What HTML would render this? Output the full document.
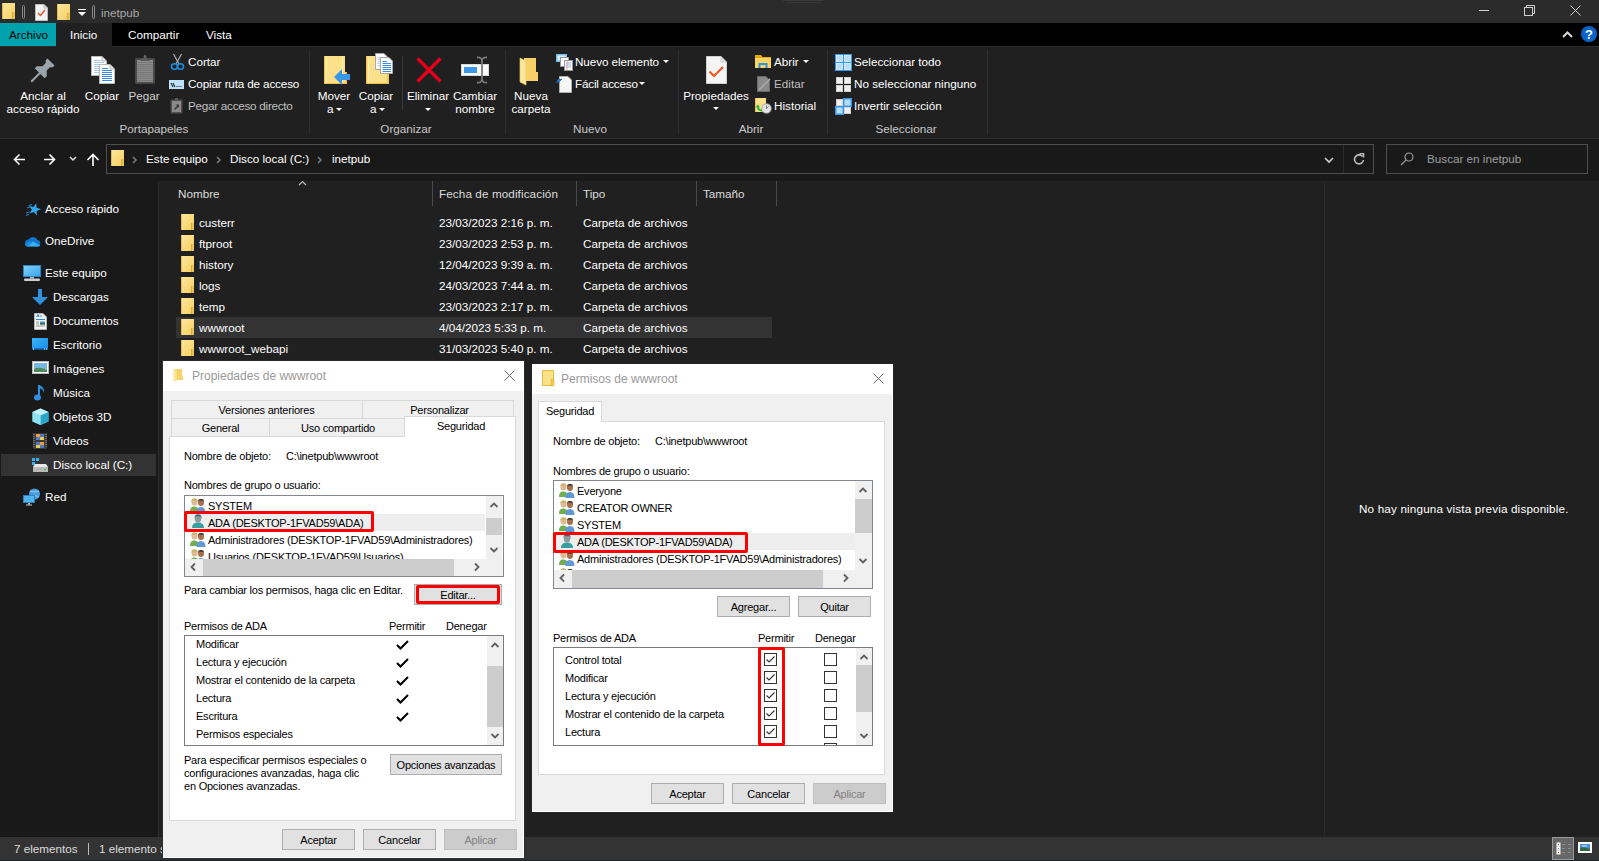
<!DOCTYPE html>
<html><head><meta charset="utf-8"><style>
html,body{margin:0;padding:0;}
body{-webkit-font-smoothing:antialiased;width:1599px;height:861px;position:relative;overflow:hidden;background:#202020;font-family:"Liberation Sans", sans-serif;}
.a{position:absolute;}
.t{position:absolute;white-space:nowrap;}
svg{shape-rendering:auto;}
</style></head><body>
<div class="a" style="left:0px;top:0px;width:1599px;height:23px;background:#2b2b2b;"></div>
<div class="a" style="left:783px;top:0px;width:40px;height:1px;background:#3a3a3a;"></div>
<div class="a" style="left:786px;top:2px;width:34px;height:1px;background:#383838;"></div>
<svg class="a" style="left:2px;top:3px" width="14" height="17" viewBox="0 0 14 17"><defs><linearGradient id="fg" x1="0" y1="0" x2="1" y2="1"><stop offset="0" stop-color="#fde69c"/><stop offset="1" stop-color="#f5cf63"/></linearGradient></defs><rect x="0" y="0" width="13" height="16" fill="url(#fg)"/><rect x="0" y="0" width="1" height="16" fill="#e9bd45"/><rect x="10" y="9" width="3" height="7" fill="#eac452"/><rect x="10" y="9" width="1" height="7" fill="#d9ad3a"/></svg>
<svg class="a" style="left:21px;top:5px" width="5" height="14" viewBox="0 0 5 14"><rect x="1.5" y="0.5" width="2" height="13" rx="1" fill="none" stroke="#8a8a8a"/></svg>
<svg class="a" style="left:35px;top:4px" width="13" height="17" viewBox="0 0 13 17"><path d="M0.5 0.5H9L12.5 4V16.5H0.5Z" fill="#f4f4f4" stroke="#bdbdbd"/><path d="M9 0.5V4H12.5" fill="#dcdcdc" stroke="#bdbdbd"/><path d="M3 9L5.5 11.5L10 6" fill="none" stroke="#e8572a" stroke-width="1.5"/></svg>
<svg class="a" style="left:57px;top:4px" width="14" height="17" viewBox="0 0 14 17"><defs><linearGradient id="fg" x1="0" y1="0" x2="1" y2="1"><stop offset="0" stop-color="#fde69c"/><stop offset="1" stop-color="#f5cf63"/></linearGradient></defs><rect x="0" y="0" width="13" height="16" fill="url(#fg)"/><rect x="0" y="0" width="1" height="16" fill="#e9bd45"/><rect x="10" y="9" width="3" height="7" fill="#eac452"/><rect x="10" y="9" width="1" height="7" fill="#d9ad3a"/></svg>
<svg class="a" style="left:78px;top:9px" width="8" height="8" viewBox="0 0 8 8"><rect x="0" y="0" width="8" height="1" fill="#fff"/><path d="M0 3H8L4 7Z" fill="#fff"/></svg>
<svg class="a" style="left:91px;top:5px" width="5" height="14" viewBox="0 0 5 14"><rect x="1.5" y="0.5" width="2" height="13" rx="1" fill="none" stroke="#8a8a8a"/></svg>
<div class="t" style="left:101px;top:7.10px;font-size:11.7px;line-height:11.7px;color:#a8a8a8;">inetpub</div>
<div class="a" style="left:1479px;top:10px;width:10px;height:1px;background:#cfcfcf;"></div>
<svg class="a" style="left:1524px;top:5px" width="11" height="11" viewBox="0 0 11 11"><rect x="0.5" y="2.5" width="8" height="8" fill="none" stroke="#cfcfcf"/><path d="M2.5 2.5V0.5H10.5V8.5H8.5" fill="none" stroke="#cfcfcf"/></svg>
<svg class="a" style="left:1570px;top:5px" width="11" height="11" viewBox="0 0 11 11"><path d="M0.5 0.5L10.5 10.5M10.5 0.5L0.5 10.5" stroke="#cfcfcf" stroke-width="1"/></svg>
<div class="a" style="left:0px;top:23px;width:1599px;height:23px;background:#000;"></div>
<div class="a" style="left:0px;top:23px;width:56px;height:23px;background:#00a3ad;"></div>
<div class="a" style="left:56px;top:23px;width:56px;height:23px;background:#202020;"></div>
<div class="t" style="left:9px;top:29.10px;font-size:11.7px;line-height:11.7px;color:#000;">Archivo</div>
<div class="t" style="left:70px;top:29.10px;font-size:11.7px;line-height:11.7px;color:#fff;">Inicio</div>
<div class="t" style="left:128px;top:29.10px;font-size:11.7px;line-height:11.7px;color:#fff;">Compartir</div>
<div class="t" style="left:206px;top:29.10px;font-size:11.7px;line-height:11.7px;color:#fff;">Vista</div>
<svg class="a" style="left:1562px;top:31px" width="11" height="7" viewBox="0 0 11 7"><path d="M1 6L5.5 1.5L10 6" fill="none" stroke="#d8d8d8" stroke-width="2"/></svg>
<svg class="a" style="left:1581px;top:26px" width="17" height="17" viewBox="0 0 17 17"><circle cx="8" cy="8" r="8" fill="#0a64c8"/><text x="8" y="13" font-family="Liberation Sans" font-weight="bold" font-size="13" fill="#fff" text-anchor="middle">?</text></svg>
<div class="a" style="left:0px;top:46px;width:1599px;height:92px;background:#202020;"></div>
<div class="a" style="left:0px;top:138px;width:1599px;height:1px;background:#2d2d2d;"></div>
<div class="a" style="left:0px;top:46px;width:56px;height:1px;background:#2b2b2b;"></div>
<div class="a" style="left:112px;top:46px;width:1487px;height:1px;background:#2b2b2b;"></div>
<div class="a" style="left:309px;top:50px;width:1px;height:84px;background:#2e2e2e;"></div>
<div class="a" style="left:505px;top:50px;width:1px;height:84px;background:#2e2e2e;"></div>
<div class="a" style="left:678px;top:50px;width:1px;height:84px;background:#2e2e2e;"></div>
<div class="a" style="left:827px;top:50px;width:1px;height:84px;background:#2e2e2e;"></div>
<div class="a" style="left:987px;top:50px;width:1px;height:84px;background:#2e2e2e;"></div>
<div class="a" style="left:402px;top:56px;width:1px;height:54px;background:#3a3a3a;"></div>
<div class="t" style="left:-46px;width:400px;text-align:center;top:123.10px;font-size:11.7px;line-height:11.7px;color:#c8c8c8;">Portapapeles</div>
<div class="t" style="left:206px;width:400px;text-align:center;top:123.10px;font-size:11.7px;line-height:11.7px;color:#c8c8c8;">Organizar</div>
<div class="t" style="left:390px;width:400px;text-align:center;top:123.10px;font-size:11.7px;line-height:11.7px;color:#c8c8c8;">Nuevo</div>
<div class="t" style="left:551px;width:400px;text-align:center;top:123.10px;font-size:11.7px;line-height:11.7px;color:#c8c8c8;">Abrir</div>
<div class="t" style="left:706px;width:400px;text-align:center;top:123.10px;font-size:11.7px;line-height:11.7px;color:#c8c8c8;">Seleccionar</div>
<svg class="a" style="left:30px;top:56px" width="28" height="28" viewBox="0 0 28 28"><g transform="translate(21,6) rotate(45)"><path d="M-5,0H5V2.5L3,4.5V9L7,13V16H1V28H-1V16H-7V13L-3,9V4.5L-5,2.5Z" fill="#9aa4ab"/></g></svg>
<div class="t" style="left:-157px;width:400px;text-align:center;top:90.10px;font-size:11.7px;line-height:11.7px;color:#fff;">Anclar al</div>
<div class="t" style="left:-157px;width:400px;text-align:center;top:103.10px;font-size:11.7px;line-height:11.7px;color:#fff;">acceso rápido</div>
<svg class="a" style="left:90px;top:55px" width="27" height="30" viewBox="0 0 27 30"><path d="M1.5 1.5H12L16.5 6V20.5H1.5Z" fill="#fff" stroke="#b8b8b8"/><path d="M12 1.5V6H16.5" fill="#e6e6e6" stroke="#b8b8b8"/><path d="M4 5.5H11M4 7.5H14M4 9.5H14M4 11.5H14M4 13.5H14M4 15.5H14M4 17.5H14" stroke="#a9c8f0"/><path d="M9.5 9.5H20L24.5 14V28.5H9.5Z" fill="#fff" stroke="#b8b8b8"/><path d="M20 9.5V14H24.5" fill="#e6e6e6" stroke="#b8b8b8"/><path d="M12 13.5H18M12 15.5H22M12 17.5H22M12 19.5H22M12 21.5H22M12 23.5H22M12 25.5H22" stroke="#3a8ae6"/></svg>
<div class="t" style="left:-98px;width:400px;text-align:center;top:90.10px;font-size:11.7px;line-height:11.7px;color:#fff;">Copiar</div>
<svg class="a" style="left:134px;top:54px" width="22" height="31" viewBox="0 0 22 31"><rect x="1" y="4" width="20" height="26" rx="1.5" fill="#4a4a4a"/><rect x="3" y="6" width="16" height="22" fill="#8c8c8c"/><path d="M3 8.5H19M3 10.5H19M3 12.5H19M3 14.5H19M3 16.5H19M3 18.5H19M3 20.5H19M3 22.5H19M3 24.5H19M3 26.5H19" stroke="#767676"/><path d="M6 7L8 4H14L16 7Z" fill="#5a5a5a"/><circle cx="11" cy="2.5" r="1.5" fill="#6a6a6a"/></svg>
<div class="t" style="left:-56px;width:400px;text-align:center;top:90.10px;font-size:11.7px;line-height:11.7px;color:#cfcfcf;">Pegar</div>
<svg class="a" style="left:170px;top:53px" width="15" height="18" viewBox="0 0 15 18"><path d="M3.5 1L9 11M11.5 1L6 11" stroke="#b0b0b0" stroke-width="1.2"/><ellipse cx="4.5" cy="13.5" rx="3" ry="2.8" fill="none" stroke="#1e8fe0" stroke-width="1.6"/><ellipse cx="10.5" cy="13.5" rx="3" ry="2.8" fill="none" stroke="#1e8fe0" stroke-width="1.6"/></svg>
<div class="t" style="left:188px;top:56.10px;font-size:11.7px;line-height:11.7px;color:#fff;">Cortar</div>
<svg class="a" style="left:169px;top:80px" width="16" height="9" viewBox="0 0 16 9"><rect x="0" y="0" width="15" height="9" fill="#bfe1fb" stroke="#8ec3ee" stroke-width="0"/><path d="M2 3L4 7M4 3L6 7" stroke="#222" stroke-width="1.1"/><path d="M7.5 6.5H8.5M9.5 6.5H10.5M11.5 6.5H12.5" stroke="#222" stroke-width="1"/></svg>
<div class="t" style="left:188px;top:78.10px;font-size:11.7px;line-height:11.7px;color:#fff;letter-spacing:-0.15px;">Copiar ruta de acceso</div>
<svg class="a" style="left:170px;top:98px" width="13" height="16" viewBox="0 0 13 16"><rect x="0.5" y="1.5" width="12" height="14" rx="1" fill="#505050"/><rect x="2" y="3" width="9" height="11" fill="#8a8a8a"/><path d="M4.5 11.5L8 8" stroke="#3c3c3c" stroke-width="1.6"/><path d="M5.5 6.5H9V10Z" fill="#3c3c3c"/><rect x="5" y="0" width="3" height="2" fill="#5a5a5a"/></svg>
<div class="t" style="left:188px;top:100.10px;font-size:11.7px;line-height:11.7px;color:#c0c0c0;letter-spacing:-0.26px;">Pegar acceso directo</div>
<svg class="a" style="left:323px;top:55px" width="28" height="31" viewBox="0 0 28 31"><rect x="1" y="1" width="21" height="28" fill="#fde08a"/><rect x="1" y="1" width="1" height="28" fill="#f5c84a"/><rect x="3" y="2" width="1" height="26" fill="#fff0b8"/><rect x="19" y="2" width="1" height="26" fill="#fff0b8"/><rect x="1" y="28" width="21" height="1" fill="#f0c040"/><path d="M22 17H24V29H22Z" fill="#f2c64e"/><path d="M11 22L19 14V19H27V25H19V30Z" fill="#3a98e6"/></svg>
<div class="t" style="left:134px;width:400px;text-align:center;top:90.10px;font-size:11.7px;line-height:11.7px;color:#fff;">Mover</div>
<div class="t" style="left:327px;top:103.10px;font-size:11.7px;line-height:11.7px;color:#fff;">a</div>
<svg class="a" style="left:336px;top:108px" width="6" height="4" viewBox="0 0 6 4"><path d="M0 0H6L3 3Z" fill="#fff"/></svg>
<svg class="a" style="left:365px;top:53px" width="29" height="32" viewBox="0 0 29 32"><rect x="1" y="3" width="21" height="28" fill="#fde08a"/><rect x="1" y="3" width="1" height="28" fill="#f5c84a"/><rect x="3" y="4" width="1" height="26" fill="#fff0b8"/><rect x="1" y="30" width="21" height="1" fill="#f0c040"/><path d="M22 20H24V31H22Z" fill="#f2c64e"/><path d="M10.5 0.5H19L22.5 4V16.5H10.5Z" fill="#fff" stroke="#a8a8a8"/><path d="M12.5 4.5H18M12.5 6.5H18M12.5 8.5H18M12.5 10.5H18M12.5 12.5H18" stroke="#a9c8f0"/><path d="M15.5 4.5H24L27.5 8V20.5H15.5Z" fill="#fff" stroke="#a8a8a8"/><path d="M17.5 8.5H22M17.5 10.5H26M17.5 12.5H26M17.5 14.5H26M17.5 16.5H26M17.5 18.5H26" stroke="#3a8ae6"/></svg>
<div class="t" style="left:176px;width:400px;text-align:center;top:90.10px;font-size:11.7px;line-height:11.7px;color:#fff;">Copiar</div>
<div class="t" style="left:370px;top:103.10px;font-size:11.7px;line-height:11.7px;color:#fff;">a</div>
<svg class="a" style="left:379px;top:108px" width="6" height="4" viewBox="0 0 6 4"><path d="M0 0H6L3 3Z" fill="#fff"/></svg>
<svg class="a" style="left:416px;top:57px" width="26" height="26" viewBox="0 0 26 26"><path d="M1.5 1.5L24.5 24.5M24.5 1.5L1.5 24.5" stroke="#e4001b" stroke-width="3.4"/></svg>
<div class="t" style="left:228px;width:400px;text-align:center;top:90.10px;font-size:11.7px;line-height:11.7px;color:#fff;">Eliminar</div>
<svg class="a" style="left:425px;top:108px" width="6" height="4" viewBox="0 0 6 4"><path d="M0 0H6L3 3Z" fill="#fff"/></svg>
<svg class="a" style="left:460px;top:56px" width="30" height="28" viewBox="0 0 30 28"><rect x="1.5" y="8.5" width="27" height="11" fill="#fafafa" stroke="#dadada"/><rect x="4" y="11" width="13" height="6" fill="#3a98e6"/><path d="M17 1.5Q22 1 22 5V23Q22 27 17 26.5M27 1.5Q22 1 22 5V23Q22 27 27 26.5" fill="none" stroke="#7a7a7a" stroke-width="1.8"/></svg>
<div class="t" style="left:275px;width:400px;text-align:center;top:90.10px;font-size:11.7px;line-height:11.7px;color:#fff;">Cambiar</div>
<div class="t" style="left:275px;width:400px;text-align:center;top:103.10px;font-size:11.7px;line-height:11.7px;color:#fff;">nombre</div>
<svg class="a" style="left:519px;top:57px" width="20" height="29" viewBox="0 0 20 29"><path d="M5 1H17V15H19V24H5Z" fill="#f7d168"/><path d="M1 1L7 4V28L1 25Z" fill="#fde7a0"/><path d="M1 1L7 4V28L1 25Z" fill="none" stroke="#f0c850" stroke-width="0.7"/></svg>
<div class="t" style="left:331px;width:400px;text-align:center;top:90.10px;font-size:11.7px;line-height:11.7px;color:#fff;">Nueva</div>
<div class="t" style="left:331px;width:400px;text-align:center;top:103.10px;font-size:11.7px;line-height:11.7px;color:#fff;">carpeta</div>
<svg class="a" style="left:556px;top:54px" width="17" height="17" viewBox="0 0 17 17"><rect x="0" y="0" width="11" height="8" fill="#7cc0f0"/><rect x="1.5" y="1.5" width="8" height="5" fill="#d8eefc"/><rect x="4.5" y="3.5" width="8" height="9" fill="#fff" stroke="#999"/><rect x="8.5" y="6.5" width="8" height="10" fill="#fff" stroke="#999"/><path d="M10 9H15M10 11H15M10 13H15" stroke="#8bb8e8"/><path d="M11 7V16" stroke="#f0a0a0"/></svg>
<div class="t" style="left:575px;top:56.10px;font-size:11.7px;line-height:11.7px;color:#fff;letter-spacing:-0.08px;">Nuevo elemento</div>
<svg class="a" style="left:663px;top:60px" width="6" height="4" viewBox="0 0 6 4"><path d="M0 0H6L3 3Z" fill="#fff"/></svg>
<svg class="a" style="left:556px;top:75px" width="16" height="18" viewBox="0 0 16 18"><path d="M3.5 1.5H12L15.5 5V17.5H3.5Z" fill="#f6f6f6" stroke="#b0b0b0"/><path d="M2 4.5H6M1 5.5H5M0 7H4" stroke="#1a78d0" stroke-width="1"/></svg>
<div class="t" style="left:575px;top:78.10px;font-size:11.7px;line-height:11.7px;color:#fff;letter-spacing:-0.18px;">Fácil acceso</div>
<svg class="a" style="left:639px;top:82px" width="6" height="4" viewBox="0 0 6 4"><path d="M0 0H6L3 3Z" fill="#fff"/></svg>
<svg class="a" style="left:705px;top:55px" width="23" height="30" viewBox="0 0 23 30"><path d="M1.5 1.5H16L21.5 7V28.5H1.5Z" fill="#f5f5f5" stroke="#d0d0d0"/><path d="M16 1.5V7H21.5" fill="#dedede" stroke="#d0d0d0"/><path d="M4.5 16.5L9 21L18 12" fill="none" stroke="#f25a1e" stroke-width="2.2"/></svg>
<div class="t" style="left:516px;width:400px;text-align:center;top:90.10px;font-size:11.7px;line-height:11.7px;color:#fff;">Propiedades</div>
<svg class="a" style="left:713px;top:107px" width="6" height="4" viewBox="0 0 6 4"><path d="M0 0H6L3 3Z" fill="#fff"/></svg>
<svg class="a" style="left:755px;top:54px" width="17" height="16" viewBox="0 0 17 16"><path d="M0 1H6L7.5 3H16V14H0Z" fill="#e8a80c"/><rect x="0" y="4" width="16" height="10" fill="#fcd462"/><path d="M3.5 14V9H12.5V14H10.5V11H5.5V14Z" fill="#2b8fe8"/></svg>
<div class="t" style="left:774px;top:56.10px;font-size:11.7px;line-height:11.7px;color:#fff;">Abrir</div>
<svg class="a" style="left:803px;top:60px" width="6" height="4" viewBox="0 0 6 4"><path d="M0 0H6L3 3Z" fill="#fff"/></svg>
<svg class="a" style="left:756px;top:75px" width="16" height="17" viewBox="0 0 16 17"><path d="M1.5 1.5H10L13.5 5V16.5H1.5Z" fill="#8a8a8a" stroke="#6a6a6a"/><path d="M3 15L14 4" stroke="#a8a8a8" stroke-width="1.6"/></svg>
<div class="t" style="left:774px;top:78.10px;font-size:11.7px;line-height:11.7px;color:#bfbfbf;">Editar</div>
<svg class="a" style="left:755px;top:97px" width="17" height="17" viewBox="0 0 17 17"><rect x="0" y="1" width="11" height="14" fill="#fde08a"/><rect x="0" y="1" width="1" height="14" fill="#f0c040"/><circle cx="11.5" cy="11.5" r="4.8" fill="#e4e4e4" stroke="#9a9a9a" stroke-width="0.8"/><path d="M11.5 8.5V11.5L13.5 9.5" stroke="#666" fill="none" stroke-width="0.8"/><path d="M2.5 9.5Q3 13.5 7 13.5" fill="none" stroke="#27b33a" stroke-width="2"/><path d="M0.5 10L3 7.5L5 10.5Z" fill="#27b33a"/></svg>
<div class="t" style="left:774px;top:100.10px;font-size:11.7px;line-height:11.7px;color:#fff;">Historial</div>
<svg class="a" style="left:835px;top:54px" width="17" height="17" viewBox="0 0 17 17"><rect x="0" y="0" width="17" height="17" fill="#3399ee"/><rect x="1.5" y="1.5" width="6" height="6" fill="#b9ddf9" stroke="#e6f3fd" stroke-width="0.8"/><rect x="9.5" y="1.5" width="6" height="6" fill="#b9ddf9" stroke="#e6f3fd" stroke-width="0.8"/><rect x="1.5" y="9.5" width="6" height="6" fill="#b9ddf9" stroke="#e6f3fd" stroke-width="0.8"/><rect x="9.5" y="9.5" width="6" height="6" fill="#b9ddf9" stroke="#e6f3fd" stroke-width="0.8"/></svg>
<div class="t" style="left:854px;top:56.10px;font-size:11.7px;line-height:11.7px;color:#fff;">Seleccionar todo</div>
<svg class="a" style="left:835px;top:76px" width="17" height="17" viewBox="0 0 17 17"><rect x="1.5" y="1.5" width="6" height="6" fill="#f0f0f0" stroke="#d0d0d0"/><rect x="9.5" y="1.5" width="6" height="6" fill="#f0f0f0" stroke="#d0d0d0"/><rect x="1.5" y="9.5" width="6" height="6" fill="#f0f0f0" stroke="#d0d0d0"/><rect x="9.5" y="9.5" width="6" height="6" fill="#f0f0f0" stroke="#d0d0d0"/></svg>
<div class="t" style="left:854px;top:78.10px;font-size:11.7px;line-height:11.7px;color:#fff;">No seleccionar ninguno</div>
<svg class="a" style="left:835px;top:98px" width="17" height="17" viewBox="0 0 17 17"><rect x="8" y="0" width="9" height="9" fill="#3399ee"/><rect x="0" y="8" width="9" height="9" fill="#3399ee"/><rect x="9.5" y="1.5" width="6" height="6" fill="#b9ddf9"/><rect x="1.5" y="9.5" width="6" height="6" fill="#b9ddf9"/><rect x="1.5" y="1.5" width="6" height="6" fill="#f0f0f0" stroke="#d0d0d0"/><rect x="9.5" y="9.5" width="6" height="6" fill="#f0f0f0" stroke="#d0d0d0"/></svg>
<div class="t" style="left:854px;top:100.10px;font-size:11.7px;line-height:11.7px;color:#fff;">Invertir selección</div>
<div class="a" style="left:0px;top:139px;width:1599px;height:42px;background:#191919;"></div>
<svg class="a" style="left:13px;top:153px" width="13" height="13" viewBox="0 0 13 13"><path d="M12 6.5H1.5M6.5 1.5L1.5 6.5L6.5 11.5" fill="none" stroke="#fff" stroke-width="1.6"/></svg>
<svg class="a" style="left:43px;top:153px" width="13" height="13" viewBox="0 0 13 13"><path d="M1 6.5H11.5M6.5 1.5L11.5 6.5L6.5 11.5" fill="none" stroke="#fff" stroke-width="1.6"/></svg>
<svg class="a" style="left:69px;top:156px" width="8" height="6" viewBox="0 0 8 6"><path d="M1 1L4 4L7 1" fill="none" stroke="#e0e0e0" stroke-width="1.5"/></svg>
<svg class="a" style="left:86px;top:153px" width="14" height="14" viewBox="0 0 14 14"><path d="M7 13V1.5M1.5 7L7 1.5L12.5 7" fill="none" stroke="#fff" stroke-width="1.6"/></svg>
<div class="a" style="left:106px;top:144px;width:1268px;height:30px;background:transparent;border:1px solid #4f4f4f;box-sizing:border-box;"></div>
<div class="a" style="left:1343px;top:145px;width:1px;height:28px;background:#2a2a2a;"></div>
<svg class="a" style="left:111px;top:150px" width="14" height="17" viewBox="0 0 14 17"><defs><linearGradient id="fg" x1="0" y1="0" x2="1" y2="1"><stop offset="0" stop-color="#fde69c"/><stop offset="1" stop-color="#f5cf63"/></linearGradient></defs><rect x="0" y="0" width="13" height="16" fill="url(#fg)"/><rect x="0" y="0" width="1" height="16" fill="#e9bd45"/><rect x="10" y="9" width="3" height="7" fill="#eac452"/><rect x="10" y="9" width="1" height="7" fill="#d9ad3a"/></svg>
<svg class="a" style="left:132px;top:156px" width="6" height="8" viewBox="0 0 6 8"><path d="M1 1L4 4L1 7" fill="none" stroke="#7a7a7a" stroke-width="1.6"/></svg>
<div class="t" style="left:146px;top:153.10px;font-size:11.7px;line-height:11.7px;color:#fff;">Este equipo</div>
<svg class="a" style="left:317px;top:156px" width="6" height="8" viewBox="0 0 6 8"><path d="M1 1L4 4L1 7" fill="none" stroke="#7a7a7a" stroke-width="1.6"/></svg>
<div class="t" style="left:230px;top:153.10px;font-size:11.7px;line-height:11.7px;color:#fff;">Disco local (C:)</div>
<svg class="a" style="left:216px;top:156px" width="6" height="8" viewBox="0 0 6 8"><path d="M1 1L4 4L1 7" fill="none" stroke="#7a7a7a" stroke-width="1.6"/></svg>
<div class="t" style="left:332px;top:153.10px;font-size:11.7px;line-height:11.7px;color:#fff;">inetpub</div>
<svg class="a" style="left:1324px;top:157px" width="10" height="7" viewBox="0 0 10 7"><path d="M1 1L5 5L9 1" fill="none" stroke="#cfcfcf" stroke-width="1.6"/></svg>
<svg class="a" style="left:1353px;top:153px" width="12" height="12" viewBox="0 0 12 12"><path d="M9.5 3.5A4.5 4.5 0 1 0 10.5 7" fill="none" stroke="#bdbdbd" stroke-width="1.6"/><path d="M6.5 0.5H10.5V4.5" fill="none" stroke="#bdbdbd" stroke-width="1.6"/></svg>
<div class="a" style="left:1386px;top:144px;width:202px;height:30px;background:transparent;border:1px solid #4f4f4f;box-sizing:border-box;"></div>
<svg class="a" style="left:1400px;top:152px" width="14" height="14" viewBox="0 0 14 14"><circle cx="9" cy="5" r="4" fill="none" stroke="#9a9a9a" stroke-width="1.2"/><path d="M6 8L1 13" stroke="#9a9a9a" stroke-width="1.2"/></svg>
<div class="t" style="left:1427px;top:153.10px;font-size:11.7px;line-height:11.7px;color:#9e9e9e;">Buscar en inetpub</div>
<div class="a" style="left:0px;top:181px;width:158px;height:656px;background:#191919;"></div>
<div class="a" style="left:158px;top:181px;width:1px;height:656px;background:#2b2b2b;"></div>
<div class="a" style="left:1px;top:454px;width:155px;height:22px;background:#333333;"></div>
<div class="t" style="left:45px;top:203.10px;font-size:11.7px;line-height:11.7px;color:#fff;">Acceso rápido</div>
<div class="t" style="left:45px;top:235.10px;font-size:11.7px;line-height:11.7px;color:#fff;">OneDrive</div>
<div class="t" style="left:45px;top:267.10px;font-size:11.7px;line-height:11.7px;color:#fff;">Este equipo</div>
<div class="t" style="left:53px;top:291.10px;font-size:11.7px;line-height:11.7px;color:#fff;">Descargas</div>
<div class="t" style="left:53px;top:315.10px;font-size:11.7px;line-height:11.7px;color:#fff;">Documentos</div>
<div class="t" style="left:53px;top:339.10px;font-size:11.7px;line-height:11.7px;color:#fff;">Escritorio</div>
<div class="t" style="left:53px;top:363.10px;font-size:11.7px;line-height:11.7px;color:#fff;">Imágenes</div>
<div class="t" style="left:53px;top:387.10px;font-size:11.7px;line-height:11.7px;color:#fff;">Música</div>
<div class="t" style="left:53px;top:411.10px;font-size:11.7px;line-height:11.7px;color:#fff;">Objetos 3D</div>
<div class="t" style="left:53px;top:435.10px;font-size:11.7px;line-height:11.7px;color:#fff;">Videos</div>
<div class="t" style="left:53px;top:459.10px;font-size:11.7px;line-height:11.7px;color:#fff;">Disco local (C:)</div>
<div class="t" style="left:45px;top:491.10px;font-size:11.7px;line-height:11.7px;color:#fff;">Red</div>
<svg class="a" style="left:26px;top:203px" width="17" height="14" viewBox="0 0 17 14"><path d="M10.18,0.22 L10.60,4.80 L14.99,6.16 L10.76,7.97 L10.83,12.57 L7.80,9.11 L3.45,10.59 L5.80,6.64 L3.05,2.96 L7.53,3.98Z" fill="#2fa8f0"/><path d="M2.5 2.5L6 1.5M1 5L4.5 4M0 10L3.5 9M-0.5 12.5L3 11.5" stroke="#2a90d8" stroke-width="0.9"/></svg>
<svg class="a" style="left:24px;top:235px" width="17" height="12" viewBox="0 0 17 12"><path d="M1 8.5A3.5 3.5 0 0 1 4.5 4.5A5 5 0 0 1 13.5 5A3.2 3.2 0 0 1 16 9.5A2 2 0 0 1 14 11.5H3A2.5 2.5 0 0 1 1 8.5Z" fill="#0f74cc"/><path d="M3 11.5L9 6.5L16 10.5A2 2 0 0 1 14 11.5Z" fill="#38aef0"/><path d="M1.5 9.5L5 7L9 6.5L3 11.5A2.5 2.5 0 0 1 1.5 9.5Z" fill="#1e8ee0"/></svg>
<svg class="a" style="left:23px;top:265px" width="18" height="17" viewBox="0 0 18 17"><defs><linearGradient id="mg" x1="0" y1="0" x2="1" y2="1"><stop offset="0" stop-color="#7fd0fa"/><stop offset="1" stop-color="#3aa6ec"/></linearGradient></defs><rect x="1" y="1" width="16" height="10" fill="url(#mg)"/><rect x="0.5" y="0.5" width="17" height="11" fill="none" stroke="#2b86c8" stroke-width="1"/><rect x="7" y="12" width="4" height="1.5" fill="#bfbfbf"/><rect x="1" y="13.5" width="16" height="2.5" rx="1" fill="#c8ccd0"/></svg>
<svg class="a" style="left:32px;top:289px" width="16" height="17" viewBox="0 0 16 17"><rect x="6" y="0" width="4" height="9" fill="#2f8fe0"/><path d="M0 8H16L8 16Z" fill="#2f8fe0"/></svg>
<svg class="a" style="left:34px;top:313px" width="13" height="17" viewBox="0 0 13 17"><path d="M0.5 0.5H9L12.5 4V16.5H0.5Z" fill="#f4f4f4" stroke="#b8b8b8"/><path d="M2.5 4L4 1.5L5 4M3 3H4.5" stroke="#2a8ae0" fill="none"/><path d="M6 3H8" stroke="#2a8ae0"/><path d="M2 6.5H11" stroke="#2a8ae0"/><path d="M2 9H5M2 11H5M2 13H11" stroke="#9a9a9a"/><rect x="6" y="8.5" width="5" height="3" fill="#4a90d0"/><rect x="6" y="10" width="5" height="1.5" fill="#3a7040"/></svg>
<svg class="a" style="left:32px;top:338px" width="17" height="13" viewBox="0 0 17 13"><defs><linearGradient id="dg" x1="0" y1="0" x2="1" y2="1"><stop offset="0" stop-color="#3ab4fa"/><stop offset="1" stop-color="#1a8ae6"/></linearGradient></defs><rect x="0" y="0" width="16" height="12" fill="url(#dg)"/><rect x="0" y="10.5" width="16" height="1.5" fill="#0c4f8a"/><rect x="1" y="10.5" width="1" height="1" fill="#fff"/><rect x="12" y="10.5" width="1" height="1" fill="#fff"/><rect x="14" y="10.5" width="1" height="1" fill="#fff"/></svg>
<svg class="a" style="left:32px;top:361px" width="17" height="14" viewBox="0 0 17 14"><rect x="0.5" y="0.5" width="16" height="12" fill="#fff" stroke="#bbb"/><rect x="2" y="2" width="13" height="9" fill="#79b7e0"/><path d="M2 8Q8 5 15 9V11H2Z" fill="#4c8a5a"/></svg>
<svg class="a" style="left:34px;top:384px" width="12" height="17" viewBox="0 0 12 17"><path d="M5 1V13" stroke="#2f8fe0" stroke-width="2"/><ellipse cx="3.5" cy="13.5" rx="3.5" ry="3" fill="#2f8fe0"/><path d="M5 1Q11 3 10 9Q9 5 5 4Z" fill="#2f8fe0"/></svg>
<svg class="a" style="left:32px;top:408px" width="17" height="18" viewBox="0 0 17 18"><path d="M8.5 0.5L16.5 4V13.5L8.5 17L0.5 13.5V4Z" fill="#62d3ea"/><path d="M0.5 4L8.5 7.5L16.5 4L8.5 0.5Z" fill="#c4f3fb"/><path d="M8.5 7.5V17L16.5 13.5V4Z" fill="#2aa5c8"/><path d="M0.5 4L8.5 7.5V17L0.5 13.5Z" fill="#8fe2f2"/></svg>
<svg class="a" style="left:33px;top:433px" width="14" height="16" viewBox="0 0 14 16"><rect x="0" y="0" width="14" height="16" fill="#3a3a3a"/><path d="M1 1V15M13 1V15" stroke="#9a9a9a" stroke-dasharray="1 1"/><rect x="3" y="1" width="8" height="6" fill="#4a7ad8"/><rect x="3" y="1" width="4" height="3" fill="#f0a030"/><rect x="7" y="4" width="4" height="3" fill="#e8d040"/><rect x="3" y="9" width="8" height="6" fill="#4a7ad8"/><rect x="7" y="9" width="4" height="3" fill="#f0a030"/><rect x="3" y="12" width="4" height="3" fill="#e8d040"/></svg>
<svg class="a" style="left:32px;top:458px" width="16" height="15" viewBox="0 0 16 15"><rect x="0" y="0" width="3" height="3" fill="#3ab0f0"/><rect x="4" y="0" width="3" height="3" fill="#3ab0f0"/><rect x="0" y="4" width="3" height="3" fill="#3ab0f0"/><path d="M1 9L3 6H14L16 9Z" fill="#e8e8e8"/><rect x="1" y="9" width="15" height="5" fill="#b8b8b8"/><rect x="12" y="11" width="2" height="1" fill="#2bd12b"/></svg>
<svg class="a" style="left:23px;top:488px" width="18" height="18" viewBox="0 0 18 18"><circle cx="11.5" cy="6" r="5.5" fill="#4a9ee0"/><path d="M7 3Q11 5 16 3M7 8Q11 6 16 9" stroke="#a8d8f8" fill="none" stroke-width="0.8"/><rect x="0.5" y="7.5" width="11" height="7" fill="#4fb4f0" stroke="#2a80c0"/><rect x="5" y="15" width="2" height="1.5" fill="#bbb"/><rect x="3" y="16.5" width="6" height="1" fill="#ccc"/></svg>
<div class="a" style="left:159px;top:181px;width:1166px;height:656px;background:#202020;"></div>
<div class="a" style="left:1324px;top:181px;width:1px;height:656px;background:#2b2b2b;"></div>
<svg class="a" style="left:298px;top:180px" width="9" height="6" viewBox="0 0 9 6"><path d="M1 5L4.5 1.5L8 5" fill="none" stroke="#bdbdbd" stroke-width="1.2"/></svg>
<div class="t" style="left:178px;top:188.10px;font-size:11.7px;line-height:11.7px;color:#dcdcdc;">Nombre</div>
<div class="t" style="left:439px;top:188.10px;font-size:11.7px;line-height:11.7px;color:#dcdcdc;letter-spacing:0.1px;">Fecha de modificación</div>
<div class="t" style="left:583px;top:188.10px;font-size:11.7px;line-height:11.7px;color:#dcdcdc;">Tipo</div>
<div class="t" style="left:703px;top:188.10px;font-size:11.7px;line-height:11.7px;color:#dcdcdc;">Tamaño</div>
<div class="a" style="left:432px;top:181px;width:1px;height:25px;background:#4a4a4a;"></div>
<div class="a" style="left:576px;top:181px;width:1px;height:25px;background:#4a4a4a;"></div>
<div class="a" style="left:696px;top:181px;width:1px;height:25px;background:#4a4a4a;"></div>
<div class="a" style="left:776px;top:181px;width:1px;height:25px;background:#4a4a4a;"></div>
<div class="a" style="left:176px;top:317px;width:596px;height:21px;background:#333333;"></div>
<svg class="a" style="left:181px;top:214px" width="14" height="17" viewBox="0 0 14 17"><defs><linearGradient id="fg" x1="0" y1="0" x2="1" y2="1"><stop offset="0" stop-color="#fde69c"/><stop offset="1" stop-color="#f5cf63"/></linearGradient></defs><rect x="0" y="0" width="13" height="16" fill="url(#fg)"/><rect x="0" y="0" width="1" height="16" fill="#e9bd45"/><rect x="10" y="9" width="3" height="7" fill="#eac452"/><rect x="10" y="9" width="1" height="7" fill="#d9ad3a"/></svg>
<div class="t" style="left:199px;top:217.10px;font-size:11.7px;line-height:11.7px;color:#fff;">custerr</div>
<div class="t" style="left:439px;top:217.10px;font-size:11.7px;line-height:11.7px;color:#fff;">23/03/2023 2:16 p. m.</div>
<div class="t" style="left:583px;top:217.10px;font-size:11.7px;line-height:11.7px;color:#fff;">Carpeta de archivos</div>
<svg class="a" style="left:181px;top:235px" width="14" height="17" viewBox="0 0 14 17"><defs><linearGradient id="fg" x1="0" y1="0" x2="1" y2="1"><stop offset="0" stop-color="#fde69c"/><stop offset="1" stop-color="#f5cf63"/></linearGradient></defs><rect x="0" y="0" width="13" height="16" fill="url(#fg)"/><rect x="0" y="0" width="1" height="16" fill="#e9bd45"/><rect x="10" y="9" width="3" height="7" fill="#eac452"/><rect x="10" y="9" width="1" height="7" fill="#d9ad3a"/></svg>
<div class="t" style="left:199px;top:238.10px;font-size:11.7px;line-height:11.7px;color:#fff;">ftproot</div>
<div class="t" style="left:439px;top:238.10px;font-size:11.7px;line-height:11.7px;color:#fff;">23/03/2023 2:53 p. m.</div>
<div class="t" style="left:583px;top:238.10px;font-size:11.7px;line-height:11.7px;color:#fff;">Carpeta de archivos</div>
<svg class="a" style="left:181px;top:256px" width="14" height="17" viewBox="0 0 14 17"><defs><linearGradient id="fg" x1="0" y1="0" x2="1" y2="1"><stop offset="0" stop-color="#fde69c"/><stop offset="1" stop-color="#f5cf63"/></linearGradient></defs><rect x="0" y="0" width="13" height="16" fill="url(#fg)"/><rect x="0" y="0" width="1" height="16" fill="#e9bd45"/><rect x="10" y="9" width="3" height="7" fill="#eac452"/><rect x="10" y="9" width="1" height="7" fill="#d9ad3a"/></svg>
<div class="t" style="left:199px;top:259.10px;font-size:11.7px;line-height:11.7px;color:#fff;">history</div>
<div class="t" style="left:439px;top:259.10px;font-size:11.7px;line-height:11.7px;color:#fff;">12/04/2023 9:39 a. m.</div>
<div class="t" style="left:583px;top:259.10px;font-size:11.7px;line-height:11.7px;color:#fff;">Carpeta de archivos</div>
<svg class="a" style="left:181px;top:277px" width="14" height="17" viewBox="0 0 14 17"><defs><linearGradient id="fg" x1="0" y1="0" x2="1" y2="1"><stop offset="0" stop-color="#fde69c"/><stop offset="1" stop-color="#f5cf63"/></linearGradient></defs><rect x="0" y="0" width="13" height="16" fill="url(#fg)"/><rect x="0" y="0" width="1" height="16" fill="#e9bd45"/><rect x="10" y="9" width="3" height="7" fill="#eac452"/><rect x="10" y="9" width="1" height="7" fill="#d9ad3a"/></svg>
<div class="t" style="left:199px;top:280.10px;font-size:11.7px;line-height:11.7px;color:#fff;">logs</div>
<div class="t" style="left:439px;top:280.10px;font-size:11.7px;line-height:11.7px;color:#fff;">24/03/2023 7:44 a. m.</div>
<div class="t" style="left:583px;top:280.10px;font-size:11.7px;line-height:11.7px;color:#fff;">Carpeta de archivos</div>
<svg class="a" style="left:181px;top:298px" width="14" height="17" viewBox="0 0 14 17"><defs><linearGradient id="fg" x1="0" y1="0" x2="1" y2="1"><stop offset="0" stop-color="#fde69c"/><stop offset="1" stop-color="#f5cf63"/></linearGradient></defs><rect x="0" y="0" width="13" height="16" fill="url(#fg)"/><rect x="0" y="0" width="1" height="16" fill="#e9bd45"/><rect x="10" y="9" width="3" height="7" fill="#eac452"/><rect x="10" y="9" width="1" height="7" fill="#d9ad3a"/></svg>
<div class="t" style="left:199px;top:301.10px;font-size:11.7px;line-height:11.7px;color:#fff;">temp</div>
<div class="t" style="left:439px;top:301.10px;font-size:11.7px;line-height:11.7px;color:#fff;">23/03/2023 2:17 p. m.</div>
<div class="t" style="left:583px;top:301.10px;font-size:11.7px;line-height:11.7px;color:#fff;">Carpeta de archivos</div>
<svg class="a" style="left:181px;top:319px" width="14" height="17" viewBox="0 0 14 17"><defs><linearGradient id="fg" x1="0" y1="0" x2="1" y2="1"><stop offset="0" stop-color="#fde69c"/><stop offset="1" stop-color="#f5cf63"/></linearGradient></defs><rect x="0" y="0" width="13" height="16" fill="url(#fg)"/><rect x="0" y="0" width="1" height="16" fill="#e9bd45"/><rect x="10" y="9" width="3" height="7" fill="#eac452"/><rect x="10" y="9" width="1" height="7" fill="#d9ad3a"/></svg>
<div class="t" style="left:199px;top:322.10px;font-size:11.7px;line-height:11.7px;color:#fff;">wwwroot</div>
<div class="t" style="left:439px;top:322.10px;font-size:11.7px;line-height:11.7px;color:#fff;">4/04/2023 5:33 p. m.</div>
<div class="t" style="left:583px;top:322.10px;font-size:11.7px;line-height:11.7px;color:#fff;">Carpeta de archivos</div>
<svg class="a" style="left:181px;top:340px" width="14" height="17" viewBox="0 0 14 17"><defs><linearGradient id="fg" x1="0" y1="0" x2="1" y2="1"><stop offset="0" stop-color="#fde69c"/><stop offset="1" stop-color="#f5cf63"/></linearGradient></defs><rect x="0" y="0" width="13" height="16" fill="url(#fg)"/><rect x="0" y="0" width="1" height="16" fill="#e9bd45"/><rect x="10" y="9" width="3" height="7" fill="#eac452"/><rect x="10" y="9" width="1" height="7" fill="#d9ad3a"/></svg>
<div class="t" style="left:199px;top:343.10px;font-size:11.7px;line-height:11.7px;color:#fff;">wwwroot_webapi</div>
<div class="t" style="left:439px;top:343.10px;font-size:11.7px;line-height:11.7px;color:#fff;">31/03/2023 5:40 p. m.</div>
<div class="t" style="left:583px;top:343.10px;font-size:11.7px;line-height:11.7px;color:#fff;">Carpeta de archivos</div>
<div class="t" style="left:1359px;top:503.10px;font-size:11.7px;line-height:11.7px;color:#fff;letter-spacing:0.16px;">No hay ninguna vista previa disponible.</div>
<div class="a" style="left:0px;top:837px;width:1599px;height:24px;background:#333333;"></div>
<div class="a" style="left:0px;top:860px;width:1599px;height:1px;background:#1c2126;"></div>
<div class="t" style="left:14px;top:843.10px;font-size:11.7px;line-height:11.7px;color:#dcdcdc;">7 elementos</div>
<div class="a" style="left:88px;top:843px;width:1px;height:11.7px;background:#bbb;"></div>
<div class="t" style="left:99px;top:843.10px;font-size:11.7px;line-height:11.7px;color:#dcdcdc;">1 elemento seleccionado</div>
<div class="a" style="left:1552px;top:837px;width:22px;height:23px;background:#676767;border:1px solid #9a9a9a;box-sizing:border-box;"></div>
<svg class="a" style="left:1556px;top:842px" width="17" height="14" viewBox="0 0 17 14"><rect x="0.5" y="0.5" width="4" height="4" fill="#fff"/><rect x="0.5" y="4.5" width="4" height="4" fill="#fff"/><rect x="0.5" y="8.5" width="4" height="4" fill="#fff"/><rect x="2" y="2" width="1" height="1" fill="#3a7a50"/><rect x="2" y="6" width="1" height="1" fill="#4a8af0"/><rect x="2" y="10" width="1" height="1" fill="#d02020"/><path d="M6 2.5H9M12 2.5H15M6 6.5H9M12 6.5H15M6 10.5H9M12 10.5H15" stroke="#8a8a8a"/></svg>
<svg class="a" style="left:1578px;top:842px" width="15" height="11" viewBox="0 0 15 11"><rect x="0" y="0" width="14" height="11" fill="#fff"/><rect x="2" y="2" width="10" height="7" fill="#4a90e0"/><path d="M2 6Q6 4 12 7V9H2Z" fill="#2f6a40"/><path d="M4 4H9" stroke="#d8ecfa"/></svg>
<div class="a" style="left:162px;top:360px;width:363px;height:499px;background:#2c2c2c;"></div>
<div class="a" style="left:163px;top:361px;width:361px;height:497px;background:#f0f0f0;border-right:1px solid #fff;border-bottom:1px solid #fff;box-sizing:border-box;"></div>
<div class="a" style="left:163px;top:361px;width:361px;height:30px;background:#fff;"></div>
<svg class="a" style="left:173px;top:369px" width="11" height="14" viewBox="0 0 11 14"><rect x="1" y="0" width="8" height="11" fill="#f6d46c"/><rect x="8.5" y="7" width="1.5" height="4" fill="#f6d46c"/><path d="M0.5 0L3.5 1.5V13L0.5 11.5Z" fill="#fde49a"/></svg>
<div class="t" style="left:192px;top:369.84px;font-size:12px;line-height:12px;color:#999999;">Propiedades de wwwroot</div>
<svg class="a" style="left:504px;top:370px" width="11" height="11" viewBox="0 0 11 11"><path d="M0.5 0.5L10.5 10.5M10.5 0.5L0.5 10.5" stroke="#6a6a6a" stroke-width="1"/></svg>
<div class="a" style="left:171px;top:400px;width:343px;height:19px;background:#f0f0f0;border:1px solid #d9d9d9;box-sizing:border-box;"></div>
<div class="a" style="left:362px;top:400px;width:1px;height:18px;background:#d9d9d9;"></div>
<div class="a" style="left:171px;top:418px;width:234px;height:19px;background:#f0f0f0;border:1px solid #d9d9d9;box-sizing:border-box;"></div>
<div class="a" style="left:269px;top:418px;width:1px;height:18px;background:#d9d9d9;"></div>
<div class="a" style="left:169px;top:436px;width:347px;height:385px;background:#fff;border:1px solid #d9d9d9;box-sizing:border-box;"></div>
<div class="a" style="left:404px;top:416px;width:112px;height:21px;background:#fff;border:1px solid #d9d9d9;border-bottom:none;box-sizing:border-box;"></div>
<div class="t" style="left:66.5px;width:400px;text-align:center;top:404.69px;font-size:11px;line-height:11px;color:#000;letter-spacing:-0.22px;">Versiones anteriores</div>
<div class="t" style="left:239.5px;width:400px;text-align:center;top:404.69px;font-size:11px;line-height:11px;color:#000;letter-spacing:-0.22px;">Personalizar</div>
<div class="t" style="left:20.5px;width:400px;text-align:center;top:422.69px;font-size:11px;line-height:11px;color:#000;letter-spacing:-0.22px;">General</div>
<div class="t" style="left:138px;width:400px;text-align:center;top:422.69px;font-size:11px;line-height:11px;color:#000;letter-spacing:-0.22px;">Uso compartido</div>
<div class="t" style="left:261px;width:400px;text-align:center;top:420.69px;font-size:11px;line-height:11px;color:#000;letter-spacing:-0.22px;">Seguridad</div>
<div class="t" style="left:184px;top:450.69px;font-size:11px;line-height:11px;color:#000;letter-spacing:-0.22px;">Nombre de objeto:</div>
<div class="t" style="left:286px;top:450.69px;font-size:11px;line-height:11px;color:#000;letter-spacing:-0.22px;">C:\inetpub\wwwroot</div>
<div class="t" style="left:184px;top:479.69px;font-size:11px;line-height:11px;color:#000;letter-spacing:-0.22px;">Nombres de grupo o usuario:</div>
<div class="a" style="left:184px;top:495px;width:320px;height:82px;background:#fff;border:1px solid #828790;box-sizing:border-box;"></div>
<div class="a" style="left:186px;top:514px;width:299px;height:17px;background:#eeeeee;"></div>
<div class="a" style="left:185px;top:496px;width:301px;height:63px;overflow:hidden">
<svg class="a" style="left:5px;top:2px" width="16" height="15" viewBox="0 0 16 15"><ellipse cx="4.5" cy="4" rx="3" ry="3.5" fill="#e2b994"/><path d="M1.5 4Q1 0 4.5 0.5Q8 0 7.5 4L6.5 2.5Q4 3 2.5 2.5Z" fill="#c9b46a"/><path d="M0 14Q0 8 4.5 8.5Q8 8.5 8.5 12V14Z" fill="#73ad52"/><ellipse cx="11" cy="4.5" rx="3" ry="3.5" fill="#a86f4a"/><path d="M8 4Q8 0.5 11 1Q14 0.5 14 4L13 2.5Q11 3 9 2.5Z" fill="#3c3c3c"/><path d="M6.5 15Q6 9 11 9Q15.5 9 15.5 15Z" fill="#5f9ad4"/></svg>
<div class="t" style="left:23px;top:4.69px;font-size:11px;line-height:11px;color:#000;letter-spacing:-0.22px;">SYSTEM</div>
<svg class="a" style="left:7px;top:18px" width="12" height="14" viewBox="0 0 12 14"><ellipse cx="6" cy="4.5" rx="3.3" ry="4" fill="#8e9a9c"/><path d="M2.5 4Q2.5 0 6 0.5Q10 0 9.5 4.5L8.5 2Q6 2.5 3.5 2Z" fill="#2e6a7a"/><path d="M0 14Q0 8.5 6 8.5Q12 8.5 12 14Z" fill="#36a0a0"/></svg>
<div class="t" style="left:23px;top:21.69px;font-size:11px;line-height:11px;color:#000;letter-spacing:-0.22px;">ADA (DESKTOP-1FVAD59\ADA)</div>
<svg class="a" style="left:5px;top:36px" width="16" height="15" viewBox="0 0 16 15"><ellipse cx="4.5" cy="4" rx="3" ry="3.5" fill="#e2b994"/><path d="M1.5 4Q1 0 4.5 0.5Q8 0 7.5 4L6.5 2.5Q4 3 2.5 2.5Z" fill="#c9b46a"/><path d="M0 14Q0 8 4.5 8.5Q8 8.5 8.5 12V14Z" fill="#73ad52"/><ellipse cx="11" cy="4.5" rx="3" ry="3.5" fill="#a86f4a"/><path d="M8 4Q8 0.5 11 1Q14 0.5 14 4L13 2.5Q11 3 9 2.5Z" fill="#3c3c3c"/><path d="M6.5 15Q6 9 11 9Q15.5 9 15.5 15Z" fill="#5f9ad4"/></svg>
<div class="t" style="left:23px;top:38.69px;font-size:11px;line-height:11px;color:#000;letter-spacing:-0.22px;">Administradores (DESKTOP-1FVAD59\Administradores)</div>
<svg class="a" style="left:5px;top:53px" width="16" height="15" viewBox="0 0 16 15"><ellipse cx="4.5" cy="4" rx="3" ry="3.5" fill="#e2b994"/><path d="M1.5 4Q1 0 4.5 0.5Q8 0 7.5 4L6.5 2.5Q4 3 2.5 2.5Z" fill="#c9b46a"/><path d="M0 14Q0 8 4.5 8.5Q8 8.5 8.5 12V14Z" fill="#73ad52"/><ellipse cx="11" cy="4.5" rx="3" ry="3.5" fill="#a86f4a"/><path d="M8 4Q8 0.5 11 1Q14 0.5 14 4L13 2.5Q11 3 9 2.5Z" fill="#3c3c3c"/><path d="M6.5 15Q6 9 11 9Q15.5 9 15.5 15Z" fill="#5f9ad4"/></svg>
<div class="t" style="left:23px;top:55.69px;font-size:11px;line-height:11px;color:#000;letter-spacing:-0.22px;">Usuarios (DESKTOP-1FVAD59\Usuarios)</div>
</div>
<div class="a" style="left:486px;top:496px;width:16px;height:63px;background:#f0f0f0;"></div>
<div class="a" style="left:486px;top:518px;width:16px;height:17px;background:#cdcdcd;"></div>
<svg class="a" style="left:489px;top:502px" width="10" height="6" viewBox="0 0 10 6"><path d="M1.5 5L5 1.5L8.5 5" fill="none" stroke="#606060" stroke-width="1.8"/></svg>
<svg class="a" style="left:489px;top:547px" width="10" height="6" viewBox="0 0 10 6"><path d="M1.5 1L5 4.5L8.5 1" fill="none" stroke="#606060" stroke-width="1.8"/></svg>
<div class="a" style="left:185px;top:559px;width:301px;height:17px;background:#f0f0f0;"></div>
<div class="a" style="left:203px;top:559px;width:251px;height:17px;background:#cdcdcd;"></div>
<svg class="a" style="left:190px;top:562px" width="6" height="10" viewBox="0 0 6 10"><path d="M5 1.5L1.5 5L5 8.5" fill="none" stroke="#606060" stroke-width="1.8"/></svg>
<svg class="a" style="left:474px;top:562px" width="6" height="10" viewBox="0 0 6 10"><path d="M1 1.5L4.5 5L1 8.5" fill="none" stroke="#606060" stroke-width="1.8"/></svg>
<div class="a" style="left:486px;top:559px;width:17px;height:17px;background:#f0f0f0;"></div>
<div class="a" style="left:184px;top:511px;width:190px;height:21px;background:transparent;border:3px solid #f00;border-radius:2px;box-sizing:border-box;"></div>
<div class="t" style="left:184px;top:584.69px;font-size:11px;line-height:11px;color:#000;letter-spacing:-0.22px;">Para cambiar los permisos, haga clic en Editar.</div>
<div class="a" style="left:414px;top:584px;width:88px;height:21px;background:#e1e1e1;border:1px solid #adadad;box-sizing:border-box;"></div>
<div class="t" style="left:258.0px;width:400px;text-align:center;top:589.69px;font-size:11px;line-height:11px;color:#000;letter-spacing:-0.22px;">Editar...</div>
<div class="a" style="left:416px;top:585px;width:84px;height:19px;background:transparent;border:3px solid #f00;border-radius:2px;box-sizing:border-box;"></div>
<div class="t" style="left:184px;top:620.69px;font-size:11px;line-height:11px;color:#000;letter-spacing:-0.22px;">Permisos de ADA</div>
<div class="t" style="left:389px;top:620.69px;font-size:11px;line-height:11px;color:#000;letter-spacing:-0.22px;">Permitir</div>
<div class="t" style="left:446px;top:620.69px;font-size:11px;line-height:11px;color:#000;letter-spacing:-0.22px;">Denegar</div>
<div class="a" style="left:184px;top:635px;width:320px;height:111px;background:#fff;border:1px solid #7a7a7a;box-sizing:border-box;"></div>
<div class="t" style="left:196px;top:638.69px;font-size:11px;line-height:11px;color:#000;letter-spacing:-0.22px;">Modificar</div>
<svg class="a" style="left:396px;top:640px" width="13" height="10" viewBox="0 0 13 10"><path d="M1 5L4.5 8.5L12 1" fill="none" stroke="#000" stroke-width="2"/></svg>
<div class="t" style="left:196px;top:656.69px;font-size:11px;line-height:11px;color:#000;letter-spacing:-0.22px;">Lectura y ejecución</div>
<svg class="a" style="left:396px;top:658px" width="13" height="10" viewBox="0 0 13 10"><path d="M1 5L4.5 8.5L12 1" fill="none" stroke="#000" stroke-width="2"/></svg>
<div class="t" style="left:196px;top:674.69px;font-size:11px;line-height:11px;color:#000;letter-spacing:-0.22px;">Mostrar el contenido de la carpeta</div>
<svg class="a" style="left:396px;top:676px" width="13" height="10" viewBox="0 0 13 10"><path d="M1 5L4.5 8.5L12 1" fill="none" stroke="#000" stroke-width="2"/></svg>
<div class="t" style="left:196px;top:692.69px;font-size:11px;line-height:11px;color:#000;letter-spacing:-0.22px;">Lectura</div>
<svg class="a" style="left:396px;top:694px" width="13" height="10" viewBox="0 0 13 10"><path d="M1 5L4.5 8.5L12 1" fill="none" stroke="#000" stroke-width="2"/></svg>
<div class="t" style="left:196px;top:710.69px;font-size:11px;line-height:11px;color:#000;letter-spacing:-0.22px;">Escritura</div>
<svg class="a" style="left:396px;top:712px" width="13" height="10" viewBox="0 0 13 10"><path d="M1 5L4.5 8.5L12 1" fill="none" stroke="#000" stroke-width="2"/></svg>
<div class="t" style="left:196px;top:728.69px;font-size:11px;line-height:11px;color:#000;letter-spacing:-0.22px;">Permisos especiales</div>
<div class="a" style="left:487px;top:636px;width:16px;height:109px;background:#f0f0f0;"></div>
<div class="a" style="left:487px;top:666px;width:16px;height:61px;background:#cdcdcd;"></div>
<svg class="a" style="left:490px;top:642px" width="10" height="6" viewBox="0 0 10 6"><path d="M1.5 5L5 1.5L8.5 5" fill="none" stroke="#606060" stroke-width="1.8"/></svg>
<svg class="a" style="left:490px;top:733px" width="10" height="6" viewBox="0 0 10 6"><path d="M1.5 1L5 4.5L8.5 1" fill="none" stroke="#606060" stroke-width="1.8"/></svg>
<div class="t" style="left:184px;top:754.69px;font-size:11px;line-height:11px;color:#000;letter-spacing:-0.22px;">Para especificar permisos especiales o</div>
<div class="t" style="left:184px;top:767.69px;font-size:11px;line-height:11px;color:#000;letter-spacing:-0.22px;">configuraciones avanzadas, haga clic</div>
<div class="t" style="left:184px;top:780.69px;font-size:11px;line-height:11px;color:#000;letter-spacing:-0.22px;">en Opciones avanzadas.</div>
<div class="a" style="left:390px;top:754px;width:112px;height:21px;background:#e1e1e1;border:1px solid #adadad;box-sizing:border-box;"></div>
<div class="t" style="left:246.0px;width:400px;text-align:center;top:759.69px;font-size:11px;line-height:11px;color:#000;letter-spacing:-0.22px;">Opciones avanzadas</div>
<div class="a" style="left:282px;top:829px;width:73px;height:21px;background:#e1e1e1;border:1px solid #adadad;box-sizing:border-box;"></div>
<div class="t" style="left:118.5px;width:400px;text-align:center;top:834.69px;font-size:11px;line-height:11px;color:#000;letter-spacing:-0.22px;">Aceptar</div>
<div class="a" style="left:363px;top:829px;width:73px;height:21px;background:#e1e1e1;border:1px solid #adadad;box-sizing:border-box;"></div>
<div class="t" style="left:199.5px;width:400px;text-align:center;top:834.69px;font-size:11px;line-height:11px;color:#000;letter-spacing:-0.22px;">Cancelar</div>
<div class="a" style="left:444px;top:829px;width:73px;height:21px;background:#cccccc;border:1px solid #bfbfbf;box-sizing:border-box;"></div>
<div class="t" style="left:280.5px;width:400px;text-align:center;top:834.69px;font-size:11px;line-height:11px;color:#838383;letter-spacing:-0.22px;">Aplicar</div>
<div class="a" style="left:531px;top:363px;width:363px;height:450px;background:#262626;"></div>
<div class="a" style="left:532px;top:364px;width:361px;height:448px;background:#f0f0f0;border-right:1px solid #fff;border-bottom:1px solid #fff;box-sizing:border-box;"></div>
<div class="a" style="left:532px;top:364px;width:361px;height:30px;background:#fff;"></div>
<svg class="a" style="left:542px;top:370px" width="13" height="17" viewBox="0 0 13 17"><rect x="0.5" y="0.5" width="11" height="15" fill="#fbe08a" stroke="#e8bd3e"/><rect x="9" y="9" width="3" height="7" fill="#f0c850" stroke="#e0b030" stroke-width="0.5"/></svg>
<div class="t" style="left:561px;top:372.84px;font-size:12px;line-height:12px;color:#999999;">Permisos de wwwroot</div>
<svg class="a" style="left:873px;top:373px" width="11" height="11" viewBox="0 0 11 11"><path d="M0.5 0.5L10.5 10.5M10.5 0.5L0.5 10.5" stroke="#6a6a6a" stroke-width="1"/></svg>
<div class="a" style="left:538px;top:421px;width:347px;height:354px;background:#fff;border:1px solid #d9d9d9;box-sizing:border-box;"></div>
<div class="a" style="left:538px;top:401px;width:64px;height:21px;background:#fff;border:1px solid #d9d9d9;border-bottom:none;box-sizing:border-box;"></div>
<div class="t" style="left:546px;top:405.69px;font-size:11px;line-height:11px;color:#000;letter-spacing:-0.22px;">Seguridad</div>
<div class="t" style="left:553px;top:435.69px;font-size:11px;line-height:11px;color:#000;letter-spacing:-0.22px;">Nombre de objeto:</div>
<div class="t" style="left:655px;top:435.69px;font-size:11px;line-height:11px;color:#000;letter-spacing:-0.22px;">C:\inetpub\wwwroot</div>
<div class="t" style="left:553px;top:465.69px;font-size:11px;line-height:11px;color:#000;letter-spacing:-0.22px;">Nombres de grupo o usuario:</div>
<div class="a" style="left:553px;top:480px;width:320px;height:109px;background:#fff;border:1px solid #828790;box-sizing:border-box;"></div>
<div class="a" style="left:555px;top:533px;width:300px;height:17px;background:#eeeeee;"></div>
<div class="a" style="left:554px;top:481px;width:301px;height:89px;overflow:hidden">
<svg class="a" style="left:5px;top:2px" width="16" height="15" viewBox="0 0 16 15"><ellipse cx="4.5" cy="4" rx="3" ry="3.5" fill="#e2b994"/><path d="M1.5 4Q1 0 4.5 0.5Q8 0 7.5 4L6.5 2.5Q4 3 2.5 2.5Z" fill="#c9b46a"/><path d="M0 14Q0 8 4.5 8.5Q8 8.5 8.5 12V14Z" fill="#73ad52"/><ellipse cx="11" cy="4.5" rx="3" ry="3.5" fill="#a86f4a"/><path d="M8 4Q8 0.5 11 1Q14 0.5 14 4L13 2.5Q11 3 9 2.5Z" fill="#3c3c3c"/><path d="M6.5 15Q6 9 11 9Q15.5 9 15.5 15Z" fill="#5f9ad4"/></svg>
<div class="t" style="left:23px;top:4.69px;font-size:11px;line-height:11px;color:#000;letter-spacing:-0.22px;">Everyone</div>
<svg class="a" style="left:5px;top:19px" width="16" height="15" viewBox="0 0 16 15"><ellipse cx="4.5" cy="4" rx="3" ry="3.5" fill="#e2b994"/><path d="M1.5 4Q1 0 4.5 0.5Q8 0 7.5 4L6.5 2.5Q4 3 2.5 2.5Z" fill="#c9b46a"/><path d="M0 14Q0 8 4.5 8.5Q8 8.5 8.5 12V14Z" fill="#73ad52"/><ellipse cx="11" cy="4.5" rx="3" ry="3.5" fill="#a86f4a"/><path d="M8 4Q8 0.5 11 1Q14 0.5 14 4L13 2.5Q11 3 9 2.5Z" fill="#3c3c3c"/><path d="M6.5 15Q6 9 11 9Q15.5 9 15.5 15Z" fill="#5f9ad4"/></svg>
<div class="t" style="left:23px;top:21.69px;font-size:11px;line-height:11px;color:#000;letter-spacing:-0.22px;">CREATOR OWNER</div>
<svg class="a" style="left:5px;top:36px" width="16" height="15" viewBox="0 0 16 15"><ellipse cx="4.5" cy="4" rx="3" ry="3.5" fill="#e2b994"/><path d="M1.5 4Q1 0 4.5 0.5Q8 0 7.5 4L6.5 2.5Q4 3 2.5 2.5Z" fill="#c9b46a"/><path d="M0 14Q0 8 4.5 8.5Q8 8.5 8.5 12V14Z" fill="#73ad52"/><ellipse cx="11" cy="4.5" rx="3" ry="3.5" fill="#a86f4a"/><path d="M8 4Q8 0.5 11 1Q14 0.5 14 4L13 2.5Q11 3 9 2.5Z" fill="#3c3c3c"/><path d="M6.5 15Q6 9 11 9Q15.5 9 15.5 15Z" fill="#5f9ad4"/></svg>
<div class="t" style="left:23px;top:38.69px;font-size:11px;line-height:11px;color:#000;letter-spacing:-0.22px;">SYSTEM</div>
<svg class="a" style="left:7px;top:53px" width="12" height="14" viewBox="0 0 12 14"><ellipse cx="6" cy="4.5" rx="3.3" ry="4" fill="#8e9a9c"/><path d="M2.5 4Q2.5 0 6 0.5Q10 0 9.5 4.5L8.5 2Q6 2.5 3.5 2Z" fill="#2e6a7a"/><path d="M0 14Q0 8.5 6 8.5Q12 8.5 12 14Z" fill="#36a0a0"/></svg>
<div class="t" style="left:23px;top:55.69px;font-size:11px;line-height:11px;color:#000;letter-spacing:-0.22px;">ADA (DESKTOP-1FVAD59\ADA)</div>
<svg class="a" style="left:5px;top:70px" width="16" height="15" viewBox="0 0 16 15"><ellipse cx="4.5" cy="4" rx="3" ry="3.5" fill="#e2b994"/><path d="M1.5 4Q1 0 4.5 0.5Q8 0 7.5 4L6.5 2.5Q4 3 2.5 2.5Z" fill="#c9b46a"/><path d="M0 14Q0 8 4.5 8.5Q8 8.5 8.5 12V14Z" fill="#73ad52"/><ellipse cx="11" cy="4.5" rx="3" ry="3.5" fill="#a86f4a"/><path d="M8 4Q8 0.5 11 1Q14 0.5 14 4L13 2.5Q11 3 9 2.5Z" fill="#3c3c3c"/><path d="M6.5 15Q6 9 11 9Q15.5 9 15.5 15Z" fill="#5f9ad4"/></svg>
<div class="t" style="left:23px;top:72.69px;font-size:11px;line-height:11px;color:#000;letter-spacing:-0.22px;">Administradores (DESKTOP-1FVAD59\Administradores)</div>
<svg class="a" style="left:5px;top:87px" width="16" height="15" viewBox="0 0 16 15"><ellipse cx="4.5" cy="4" rx="3" ry="3.5" fill="#e2b994"/><path d="M1.5 4Q1 0 4.5 0.5Q8 0 7.5 4L6.5 2.5Q4 3 2.5 2.5Z" fill="#c9b46a"/><path d="M0 14Q0 8 4.5 8.5Q8 8.5 8.5 12V14Z" fill="#73ad52"/><ellipse cx="11" cy="4.5" rx="3" ry="3.5" fill="#a86f4a"/><path d="M8 4Q8 0.5 11 1Q14 0.5 14 4L13 2.5Q11 3 9 2.5Z" fill="#3c3c3c"/><path d="M6.5 15Q6 9 11 9Q15.5 9 15.5 15Z" fill="#5f9ad4"/></svg>
<div class="t" style="left:23px;top:89.69px;font-size:11px;line-height:11px;color:#000;letter-spacing:-0.22px;">Usuarios</div>
</div>
<div class="a" style="left:855px;top:481px;width:17px;height:89px;background:#f0f0f0;"></div>
<div class="a" style="left:855px;top:499px;width:17px;height:34px;background:#cdcdcd;"></div>
<svg class="a" style="left:858px;top:487px" width="10" height="6" viewBox="0 0 10 6"><path d="M1.5 5L5 1.5L8.5 5" fill="none" stroke="#606060" stroke-width="1.8"/></svg>
<svg class="a" style="left:858px;top:558px" width="10" height="6" viewBox="0 0 10 6"><path d="M1.5 1L5 4.5L8.5 1" fill="none" stroke="#606060" stroke-width="1.8"/></svg>
<div class="a" style="left:554px;top:570px;width:301px;height:18px;background:#f0f0f0;"></div>
<div class="a" style="left:572px;top:570px;width:251px;height:18px;background:#cdcdcd;"></div>
<svg class="a" style="left:559px;top:573px" width="6" height="10" viewBox="0 0 6 10"><path d="M5 1.5L1.5 5L5 8.5" fill="none" stroke="#606060" stroke-width="1.8"/></svg>
<svg class="a" style="left:843px;top:573px" width="6" height="10" viewBox="0 0 6 10"><path d="M1 1.5L4.5 5L1 8.5" fill="none" stroke="#606060" stroke-width="1.8"/></svg>
<div class="a" style="left:855px;top:570px;width:17px;height:18px;background:#f0f0f0;"></div>
<div class="a" style="left:553px;top:532px;width:195px;height:21px;background:transparent;border:3px solid #f00;border-radius:2px;box-sizing:border-box;"></div>
<div class="a" style="left:717px;top:596px;width:73px;height:21px;background:#e1e1e1;border:1px solid #adadad;box-sizing:border-box;"></div>
<div class="t" style="left:553.5px;width:400px;text-align:center;top:601.69px;font-size:11px;line-height:11px;color:#000;letter-spacing:-0.22px;">Agregar...</div>
<div class="a" style="left:798px;top:596px;width:73px;height:21px;background:#e1e1e1;border:1px solid #adadad;box-sizing:border-box;"></div>
<div class="t" style="left:634.5px;width:400px;text-align:center;top:601.69px;font-size:11px;line-height:11px;color:#000;letter-spacing:-0.22px;">Quitar</div>
<div class="t" style="left:553px;top:632.69px;font-size:11px;line-height:11px;color:#000;letter-spacing:-0.22px;">Permisos de ADA</div>
<div class="t" style="left:758px;top:632.69px;font-size:11px;line-height:11px;color:#000;letter-spacing:-0.22px;">Permitir</div>
<div class="t" style="left:815px;top:632.69px;font-size:11px;line-height:11px;color:#000;letter-spacing:-0.22px;">Denegar</div>
<div class="a" style="left:553px;top:647px;width:320px;height:99px;background:#fff;border:1px solid #7a7a7a;box-sizing:border-box;"></div>
<div class="t" style="left:565px;top:654.69px;font-size:11px;line-height:11px;color:#000;letter-spacing:-0.22px;">Control total</div>
<svg class="a" style="left:764px;top:653px" width="13" height="13" viewBox="0 0 13 13"><rect x="0.5" y="0.5" width="12" height="12" fill="#fff" stroke="#333"/><path d="M2.5 6.5L5 9L10.5 3.5" fill="none" stroke="#333" stroke-width="1.1"/></svg>
<svg class="a" style="left:824px;top:653px" width="13" height="13" viewBox="0 0 13 13"><rect x="0.5" y="0.5" width="12" height="12" fill="#fff" stroke="#333"/></svg>
<div class="t" style="left:565px;top:672.69px;font-size:11px;line-height:11px;color:#000;letter-spacing:-0.22px;">Modificar</div>
<svg class="a" style="left:764px;top:671px" width="13" height="13" viewBox="0 0 13 13"><rect x="0.5" y="0.5" width="12" height="12" fill="#fff" stroke="#333"/><path d="M2.5 6.5L5 9L10.5 3.5" fill="none" stroke="#333" stroke-width="1.1"/></svg>
<svg class="a" style="left:824px;top:671px" width="13" height="13" viewBox="0 0 13 13"><rect x="0.5" y="0.5" width="12" height="12" fill="#fff" stroke="#333"/></svg>
<div class="t" style="left:565px;top:690.69px;font-size:11px;line-height:11px;color:#000;letter-spacing:-0.22px;">Lectura y ejecución</div>
<svg class="a" style="left:764px;top:689px" width="13" height="13" viewBox="0 0 13 13"><rect x="0.5" y="0.5" width="12" height="12" fill="#fff" stroke="#333"/><path d="M2.5 6.5L5 9L10.5 3.5" fill="none" stroke="#333" stroke-width="1.1"/></svg>
<svg class="a" style="left:824px;top:689px" width="13" height="13" viewBox="0 0 13 13"><rect x="0.5" y="0.5" width="12" height="12" fill="#fff" stroke="#333"/></svg>
<div class="t" style="left:565px;top:708.69px;font-size:11px;line-height:11px;color:#000;letter-spacing:-0.22px;">Mostrar el contenido de la carpeta</div>
<svg class="a" style="left:764px;top:707px" width="13" height="13" viewBox="0 0 13 13"><rect x="0.5" y="0.5" width="12" height="12" fill="#fff" stroke="#333"/><path d="M2.5 6.5L5 9L10.5 3.5" fill="none" stroke="#333" stroke-width="1.1"/></svg>
<svg class="a" style="left:824px;top:707px" width="13" height="13" viewBox="0 0 13 13"><rect x="0.5" y="0.5" width="12" height="12" fill="#fff" stroke="#333"/></svg>
<div class="t" style="left:565px;top:726.69px;font-size:11px;line-height:11px;color:#000;letter-spacing:-0.22px;">Lectura</div>
<svg class="a" style="left:764px;top:725px" width="13" height="13" viewBox="0 0 13 13"><rect x="0.5" y="0.5" width="12" height="12" fill="#fff" stroke="#333"/><path d="M2.5 6.5L5 9L10.5 3.5" fill="none" stroke="#333" stroke-width="1.1"/></svg>
<svg class="a" style="left:824px;top:725px" width="13" height="13" viewBox="0 0 13 13"><rect x="0.5" y="0.5" width="12" height="12" fill="#fff" stroke="#333"/></svg>
<svg class="a" style="left:824px;top:743px" width="13" height="2" viewBox="0 0 13 2"><rect x="0.5" y="0.5" width="12" height="3" fill="#fff" stroke="#333"/></svg>
<div class="a" style="left:856px;top:648px;width:16px;height:97px;background:#f0f0f0;"></div>
<div class="a" style="left:856px;top:665px;width:16px;height:47px;background:#cdcdcd;"></div>
<svg class="a" style="left:859px;top:654px" width="10" height="6" viewBox="0 0 10 6"><path d="M1.5 5L5 1.5L8.5 5" fill="none" stroke="#606060" stroke-width="1.8"/></svg>
<svg class="a" style="left:859px;top:733px" width="10" height="6" viewBox="0 0 10 6"><path d="M1.5 1L5 4.5L8.5 1" fill="none" stroke="#606060" stroke-width="1.8"/></svg>
<div class="a" style="left:758px;top:647px;width:27px;height:99px;background:transparent;border:3px solid #f00;border-radius:2px;box-sizing:border-box;"></div>
<div class="a" style="left:651px;top:783px;width:73px;height:21px;background:#e1e1e1;border:1px solid #adadad;box-sizing:border-box;"></div>
<div class="t" style="left:487.5px;width:400px;text-align:center;top:788.69px;font-size:11px;line-height:11px;color:#000;letter-spacing:-0.22px;">Aceptar</div>
<div class="a" style="left:732px;top:783px;width:73px;height:21px;background:#e1e1e1;border:1px solid #adadad;box-sizing:border-box;"></div>
<div class="t" style="left:568.5px;width:400px;text-align:center;top:788.69px;font-size:11px;line-height:11px;color:#000;letter-spacing:-0.22px;">Cancelar</div>
<div class="a" style="left:813px;top:783px;width:73px;height:21px;background:#cccccc;border:1px solid #bfbfbf;box-sizing:border-box;"></div>
<div class="t" style="left:649.5px;width:400px;text-align:center;top:788.69px;font-size:11px;line-height:11px;color:#838383;letter-spacing:-0.22px;">Aplicar</div>
</body></html>
